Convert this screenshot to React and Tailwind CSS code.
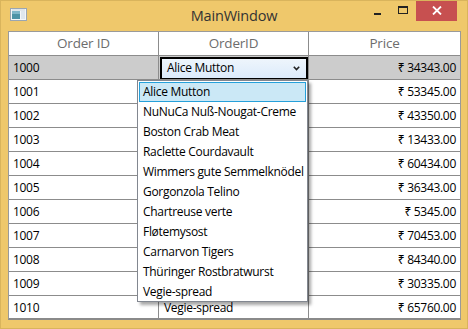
import React from "react";

const rows = [
  ["1000", "Alice Mutton", "₹ 34343.00"],
  ["1001", "NuNuCa Nuß-Nougat-Creme", "₹ 53345.00"],
  ["1002", "Boston Crab Meat", "₹ 43350.00"],
  ["1003", "Raclette Courdavault", "₹ 13433.00"],
  ["1004", "Wimmers gute Semmelknödel", "₹ 60434.00"],
  ["1005", "Gorgonzola Telino", "₹ 36343.00"],
  ["1006", "Chartreuse verte", "₹ 5345.00"],
  ["1007", "Fløtemysost", "₹ 70453.00"],
  ["1008", "Carnarvon Tigers", "₹ 84340.00"],
  ["1009", "Thüringer Rostbratwurst", "₹ 30335.00"],
  ["1010", "Vegie-spread", "₹ 65760.00"],
];

const items = [
  "Alice Mutton",
  "NuNuCa Nuß-Nougat-Creme",
  "Boston Crab Meat",
  "Raclette Courdavault",
  "Wimmers gute Semmelknödel",
  "Gorgonzola Telino",
  "Chartreuse verte",
  "Fløtemysost",
  "Carnarvon Tigers",
  "Thüringer Rostbratwurst",
  "Vegie-spread",
];

function AppIcon() {
  return (
    <svg width="17" height="13" viewBox="0 0 17 13">
      <rect x="0.5" y="0.5" width="16" height="12" fill="#f4f6f8" stroke="#9aa6b2" />
      <rect x="2" y="3" width="8" height="8" fill="#4d93a6" />
      <rect x="2" y="3" width="8" height="3" fill="#7fb6c8" />
      <rect x="11" y="3" width="4" height="8" fill="#dfe7ee" />
      <rect x="2" y="1.5" width="13" height="1" fill="#c9d3dc" />
    </svg>
  );
}

export default function App() {
  return (
    <div
      className="relative w-[468px] h-[329px] bg-[#efc86b] border border-[#d9b45c] overflow-hidden text-black"
      style={{ fontFamily: '"Segoe UI", "Open Sans", "Noto Sans", sans-serif' }}
    >
      {/* Title bar */}
      <div className="relative h-[30px] flex items-start">
        <div className="absolute left-[9px] top-[7px]">
          <AppIcon />
        </div>
        <div className="w-full text-center text-[14.5px] leading-none pt-[8px] text-[#333] tracking-[-0.2px]">MainWindow</div>
        <div className="absolute right-[10px] top-[-1px] flex items-start">
          <div className="w-[26px] h-[20px] flex items-center justify-center">
            <div className="w-[7px] h-[2px] bg-[#222] mt-[7px]" />
          </div>
          <div className="w-[26px] h-[20px] flex items-center justify-center">
            <div className="w-[10px] h-[8px] border border-[#222] border-t-2" />
          </div>
          <div className="w-[41px] h-[21px] bg-[#c75050] flex items-center justify-center">
            <svg width="10" height="9" viewBox="0 0 10 9">
              <path d="M1 0.5 L9 8.5 M9 0.5 L1 8.5" stroke="#fff" strokeWidth="1.8" />
            </svg>
          </div>
        </div>
      </div>

      {/* Grid */}
      <div className="ml-[7px] w-[453px] h-[289px] bg-white border border-[#9a9a9a] border-b-2 border-b-[#8a8a8a] overflow-hidden">
        <div className="grid grid-cols-[150px_150px_151px] h-[24px] border-b border-[#8c8c8c] text-[13.5px] text-[#6d6d6d] tracking-[-0.2px]">
          <div className="border-r border-[#8c8c8c] flex items-center justify-center">Order ID</div>
          <div className="border-r border-[#8c8c8c] flex items-center justify-center">OrderID</div>
          <div className="flex items-center justify-center">Price</div>
        </div>
        {rows.map((r, i) => (
          <div
            key={r[0]}
            className={`grid grid-cols-[150px_150px_151px] h-[24px] border-b border-[#8c8c8c] text-[12px] tracking-[-0.3px] whitespace-nowrap ${
              i === 0 ? "bg-[#cccccc]" : ""
            } ${i === rows.length - 1 ? "border-b-0" : ""}`}
          >
            <div className="border-r border-[#8c8c8c] flex items-center pl-[4px] overflow-hidden">{r[0]}</div>
            <div className="border-r border-[#8c8c8c] flex items-center overflow-hidden">
              {i === 0 ? (
                <div className="ml-[1px] mt-[1px] w-[148px] h-[23px] border-2 border-black bg-gradient-to-b from-[#eef5fc] to-[#dcebfb] flex items-center pl-[5px] pr-[6px] justify-between">
                  <span>{r[1]}</span>
                  <svg width="7" height="5" viewBox="0 0 7 5">
                    <path d="M0.8 0.8 L3.5 3.6 L6.2 0.8" stroke="#222" strokeWidth="1.6" fill="none" />
                  </svg>
                </div>
              ) : (
                <span className="pl-[5px]">{r[1]}</span>
              )}
            </div>
            <div className="flex items-center justify-end pr-[4px] overflow-hidden">{r[2]}</div>
          </div>
        ))}
      </div>

      {/* Dropdown popup */}
      <div className="absolute left-[136px] top-[79px] w-[171px] h-[222px] bg-white border border-[#828790] shadow-[3px_3px_3px_rgba(0,0,0,0.35)] p-[1px] text-[12px] tracking-[-0.3px] whitespace-nowrap overflow-hidden">
        {items.map((it, i) => (
          <div
            key={it}
            className={`h-[20px] flex items-center ${
              i === 0 ? "bg-[#cbe8f6] border border-[#26a0da] pl-[3px]" : "pl-[4px]"
            }`}
          >
            {it}
          </div>
        ))}
      </div>
    </div>
  );
}
